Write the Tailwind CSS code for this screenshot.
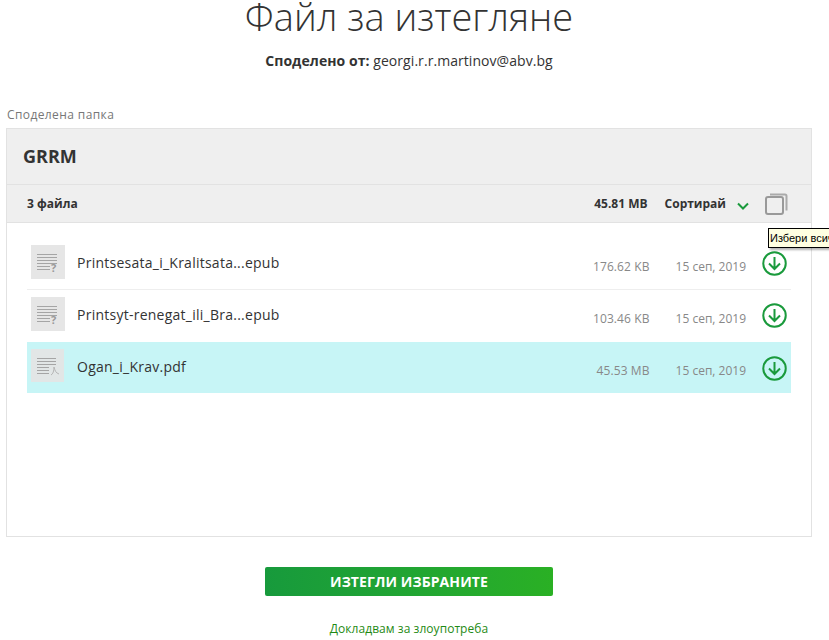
<!DOCTYPE html>
<html lang="bg">
<head>
  <meta charset="UTF-8">
  <title>Файл за изтегляне</title>
  <script src="https://cdn.jsdelivr.net/npm/@tailwindcss/browser@4"></script>
</head>
<body class="relative h-[640px] overflow-hidden bg-white font-['Open_Sans',sans-serif] text-[#333]">
  <div class="w-[818px]">
    <!-- Title -->
    <h1 class="text-center text-[38px] leading-[32px] font-light text-[#333]">Файл за изтегляне</h1>
    <p class="mt-[19px] text-center text-[14px] leading-[20px] tracking-[0.06px] text-[#333]"><b class="font-bold">Споделено от:</b> georgi.r.r.martinov@abv.bg</p>

    <p class="mt-[35px] ml-[7px] text-[12px] leading-[18px] tracking-[0.4px] text-[#777]">Споделена папка</p>

    <!-- Folder panel -->
    <div class="mt-[4px] ml-[6px] flex h-[409px] w-[806px] flex-col border border-[#e2e2e2]">
      <div class="flex h-[56px] items-center border-b border-[#e2e2e2] bg-[#efefef] pl-[16px]">
        <h2 class="text-[18px] font-bold text-[#333]">GRRM</h2>
      </div>
      <div class="flex h-[38px] items-center border-b border-[#e2e2e2] bg-[#efefef] pl-[20px] text-[12px] font-bold text-[#333]">
        <span>3 файла</span>
        <span class="ml-auto">45.81 MB</span>
        <span class="ml-[17px]">Сортирай</span>
        <svg class="mt-[4px] ml-[11px]" width="12" height="8" viewBox="0 0 12 8" fill="none" stroke="#1a9a3c" stroke-width="2"><path d="M1 1.500l5 5 5-5"/></svg>
        <svg class="mr-[23px] ml-[16px]" width="23" height="22" viewBox="0 0 23 22" fill="none" stroke="#999" stroke-width="2"><path d="M5 1.500h15a1.500 1.500 0 0 1 1.500 1.500v14.500" stroke="#aaa"/><rect x="1" y="4" width="17" height="17" rx="2"/></svg>
      </div>

      <!-- File rows -->
      <ul class="mx-[20px] mt-[15px]">
        <li class="flex h-[52px] items-start border-b border-[#eee] pt-[7px] pl-[4px]">
          <svg class="shrink-0" width="34" height="34" viewBox="0 0 34 34"><rect width="34" height="34" fill="#e6e6e6"/><path d="M6 9.500h20M6 12.500h20M6 15.500h20M6 18.500h20M6 21.500h13M6 24.500h13" stroke="#a5a5a5"/><text x="20" y="27" font-size="11" font-weight="700" fill="#999" font-family="Open Sans">?</text></svg>
          <span class="ml-[12px] text-[14px] leading-[36px] tracking-[0.25px] text-[#333]">Printsesata_i_Kralitsata...epub</span>
          <span class="mt-[13px] ml-auto text-[12px] leading-[18px] tracking-[0.1px] text-[#888]">176.62 KB</span>
          <span class="mt-[13px] ml-[26px] text-[12px] leading-[18px] text-[#888]">15 сеп, 2019</span>
          <svg class="mt-[6px] mr-[4px] ml-[16px] shrink-0" width="25" height="25" viewBox="0 0 25 25" fill="none" stroke="#1a9a3c" stroke-width="2"><circle cx="12.500" cy="12.500" r="11.250"/><path d="M12.500 6v12M7 12.500l5.500 5.500 5.500-5.500"/></svg>
        </li>
        <li class="flex h-[52px] items-start pt-[7px] pl-[4px]">
          <svg class="shrink-0" width="34" height="34" viewBox="0 0 34 34"><rect width="34" height="34" fill="#e6e6e6"/><path d="M6 9.500h20M6 12.500h20M6 15.500h20M6 18.500h20M6 21.500h13M6 24.500h13" stroke="#a5a5a5"/><text x="20" y="27" font-size="11" font-weight="700" fill="#999" font-family="Open Sans">?</text></svg>
          <span class="ml-[12px] text-[14px] leading-[36px] tracking-[0.25px] text-[#333]">Printsyt-renegat_ili_Bra...epub</span>
          <span class="mt-[13px] ml-auto text-[12px] leading-[18px] tracking-[0.1px] text-[#888]">103.46 KB</span>
          <span class="mt-[13px] ml-[26px] text-[12px] leading-[18px] text-[#888]">15 сеп, 2019</span>
          <svg class="mt-[6px] mr-[4px] ml-[16px] shrink-0" width="25" height="25" viewBox="0 0 25 25" fill="none" stroke="#1a9a3c" stroke-width="2"><circle cx="12.500" cy="12.500" r="11.250"/><path d="M12.500 6v12M7 12.500l5.500 5.500 5.500-5.500"/></svg>
        </li>
        <li class="flex h-[51px] items-start bg-[#c7f5f6] pt-[7px] pl-[4px]">
          <svg class="shrink-0" width="33" height="33" viewBox="0 0 33 33"><rect width="33" height="33" fill="#e2e6e6"/><path d="M6 9.500h19M6 12.500h19M6 15.500h19M6 18.500h12M6 21.500h12M6 24.500h12" stroke="#a5a5a5"/><path d="M20 26c2-1 3-4 3-8 1 4 2 6 5 7" fill="none" stroke="#b5b5b5"/></svg>
          <span class="ml-[13px] text-[14px] leading-[36px] tracking-[0.25px] text-[#333]">Ogan_i_Krav.pdf</span>
          <span class="mt-[13px] ml-auto text-[12px] leading-[18px] tracking-[0.1px] text-[#888]">45.53 MB</span>
          <span class="mt-[13px] ml-[26px] text-[12px] leading-[18px] text-[#888]">15 сеп, 2019</span>
          <svg class="mt-[7px] mr-[4px] ml-[16px] shrink-0" width="25" height="25" viewBox="0 0 25 25" fill="none" stroke="#1a9a3c" stroke-width="2"><circle cx="12.500" cy="12.500" r="11.250"/><path d="M12.500 6v12M7 12.500l5.500 5.500 5.500-5.500"/></svg>
        </li>
      </ul>
    </div>

    <!-- Actions -->
    <button class="mx-auto mt-[30px] block h-[29px] w-[288px] rounded-[2px] bg-gradient-to-r from-[#179a3c] to-[#2ab024] text-[14px] font-bold tracking-[0.1px] text-white">ИЗТЕГЛИ ИЗБРАНИТЕ</button>
    <p class="mt-[24px] text-center text-[12px] leading-[18px] tracking-[0.05px] text-[#1f8a14]">Докладвам за злоупотреба</p>
  </div>

  <!-- Browser tooltip -->
  <div class="absolute top-[228px] left-[768px] h-[20px] whitespace-nowrap border border-black bg-[#ffffe1] px-[1px] font-['Liberation_Sans',sans-serif] text-[11px] leading-[18px] text-black shadow-[2px_2px_2px_rgba(0,0,0,0.3)]">Избери всичко</div>
</body>
</html>
